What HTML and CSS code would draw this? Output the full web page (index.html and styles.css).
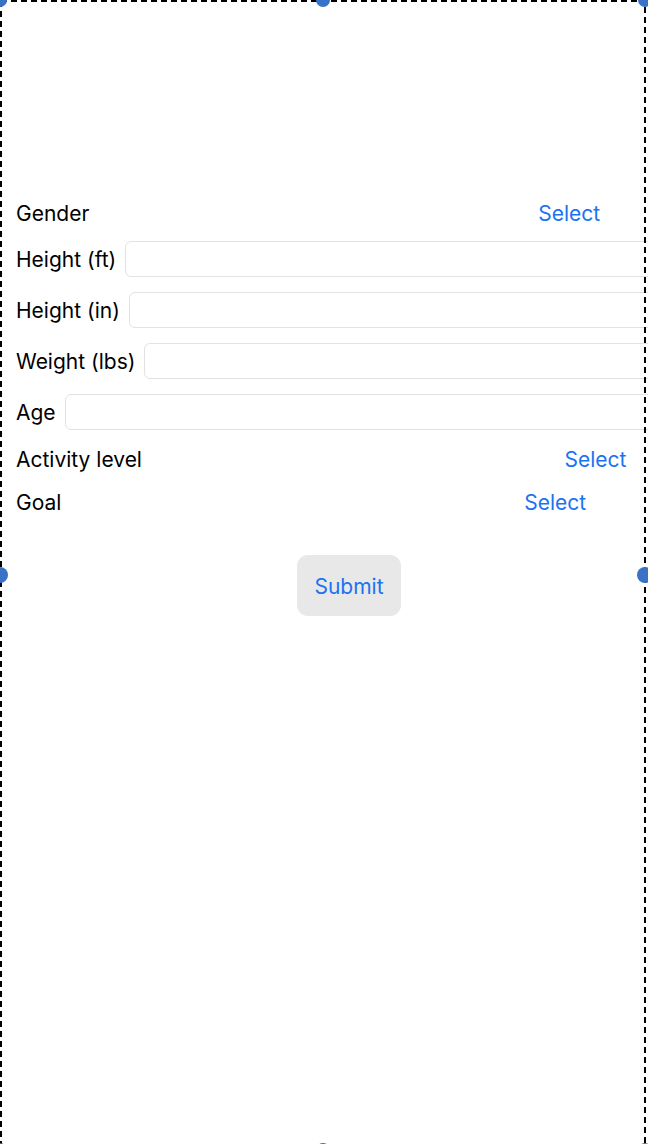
FILE: index.html
```html
<!DOCTYPE html>
<html>
<head>
<meta charset="utf-8">
<link rel="stylesheet" href="styles.css">
</head>
<body>
<div class="page">
  <form class="form">
    <div class="row row-picker row-gender">
      <span class="label">Gender</span>
      <span class="picker">Select</span>
    </div>
    <div class="row row-input">
      <span class="label">Height (ft)</span>
      <input class="field" type="text">
    </div>
    <div class="row row-input">
      <span class="label">Height (in)</span>
      <input class="field" type="text">
    </div>
    <div class="row row-input">
      <span class="label">Weight (lbs)</span>
      <input class="field" type="text">
    </div>
    <div class="row row-input">
      <span class="label">Age</span>
      <input class="field" type="text">
    </div>
    <div class="row row-picker row-activity">
      <span class="label">Activity level</span>
      <span class="picker">Select</span>
    </div>
    <div class="row row-picker row-goal">
      <span class="label">Goal</span>
      <span class="picker">Select</span>
    </div>
    <div class="submit-row">
      <button class="submit" type="button">Submit</button>
    </div>
  </form>
  <svg class="selection" width="648" height="1144" viewBox="0 0 648 1144">
    <rect x="1" y="1" width="644" height="1144" fill="none" stroke="#000" stroke-width="2" stroke-dasharray="6 4"/>
    <circle cx="0" cy="0" r="7" fill="#3a72c7"/>
    <circle cx="323" cy="0" r="7" fill="#3a72c7"/>
    <circle cx="645" cy="0" r="7" fill="#3a72c7"/>
    <circle cx="0" cy="575" r="8" fill="#3a72c7"/>
    <circle cx="645" cy="575" r="8" fill="#3a72c7"/>
    <circle cx="0" cy="1150" r="7" fill="#3a72c7"/>
    <circle cx="323" cy="1150" r="7" fill="#3a72c7"/>
    <circle cx="645" cy="1150" r="7" fill="#3a72c7"/>
  </svg>
</div>
</body>
</html>
```

FILE: styles.css
```css
html, body {
  margin: 0;
  padding: 0;
  background: #fff;
}

body {
  width: 648px;
  height: 1144px;
  overflow: hidden;
  font-family: Inter, "Liberation Sans", sans-serif;
  color: #000;
}

.page {
  position: relative;
  width: 648px;
  height: 1144px;
  overflow: hidden;
}

.form {
  display: flex;
  flex-direction: column;
  width: 1024px;
  padding: 202px 0 0 16px;
  margin: 0;
}

.row {
  display: flex;
  align-items: center;
  gap: 9px;
  font-size: 21px;
  line-height: 24px;
}

.label {
  white-space: nowrap;
}

.picker {
  flex: 1;
  text-align: center;
  color: #1a73f2;
}

.row-input {
  height: 36px;
  margin-top: 15px;
}

.row-input .label {
  padding-top: 1px;
}

.field {
  flex: 1;
  height: 36px;
  box-sizing: border-box;
  border: 1px solid #e2e2e2;
  border-radius: 6px;
  background: #fff;
  margin: 0;
  padding: 0 8px;
  font: inherit;
  outline: none;
}

.row-activity {
  margin-top: 18px;
}

.row-goal {
  margin-top: 19px;
}

.submit-row {
  display: flex;
  margin-top: 40px;
  padding-left: 281px;
}

.submit {
  width: 104px;
  height: 61px;
  border: none;
  border-radius: 11px;
  background: #e8e8e8;
  color: #1a73f2;
  font-family: inherit;
  font-size: 21px;
  padding: 1px 0 0;
  cursor: pointer;
}

.selection {
  position: absolute;
  left: 0;
  top: 0;
  pointer-events: none;
}
```
